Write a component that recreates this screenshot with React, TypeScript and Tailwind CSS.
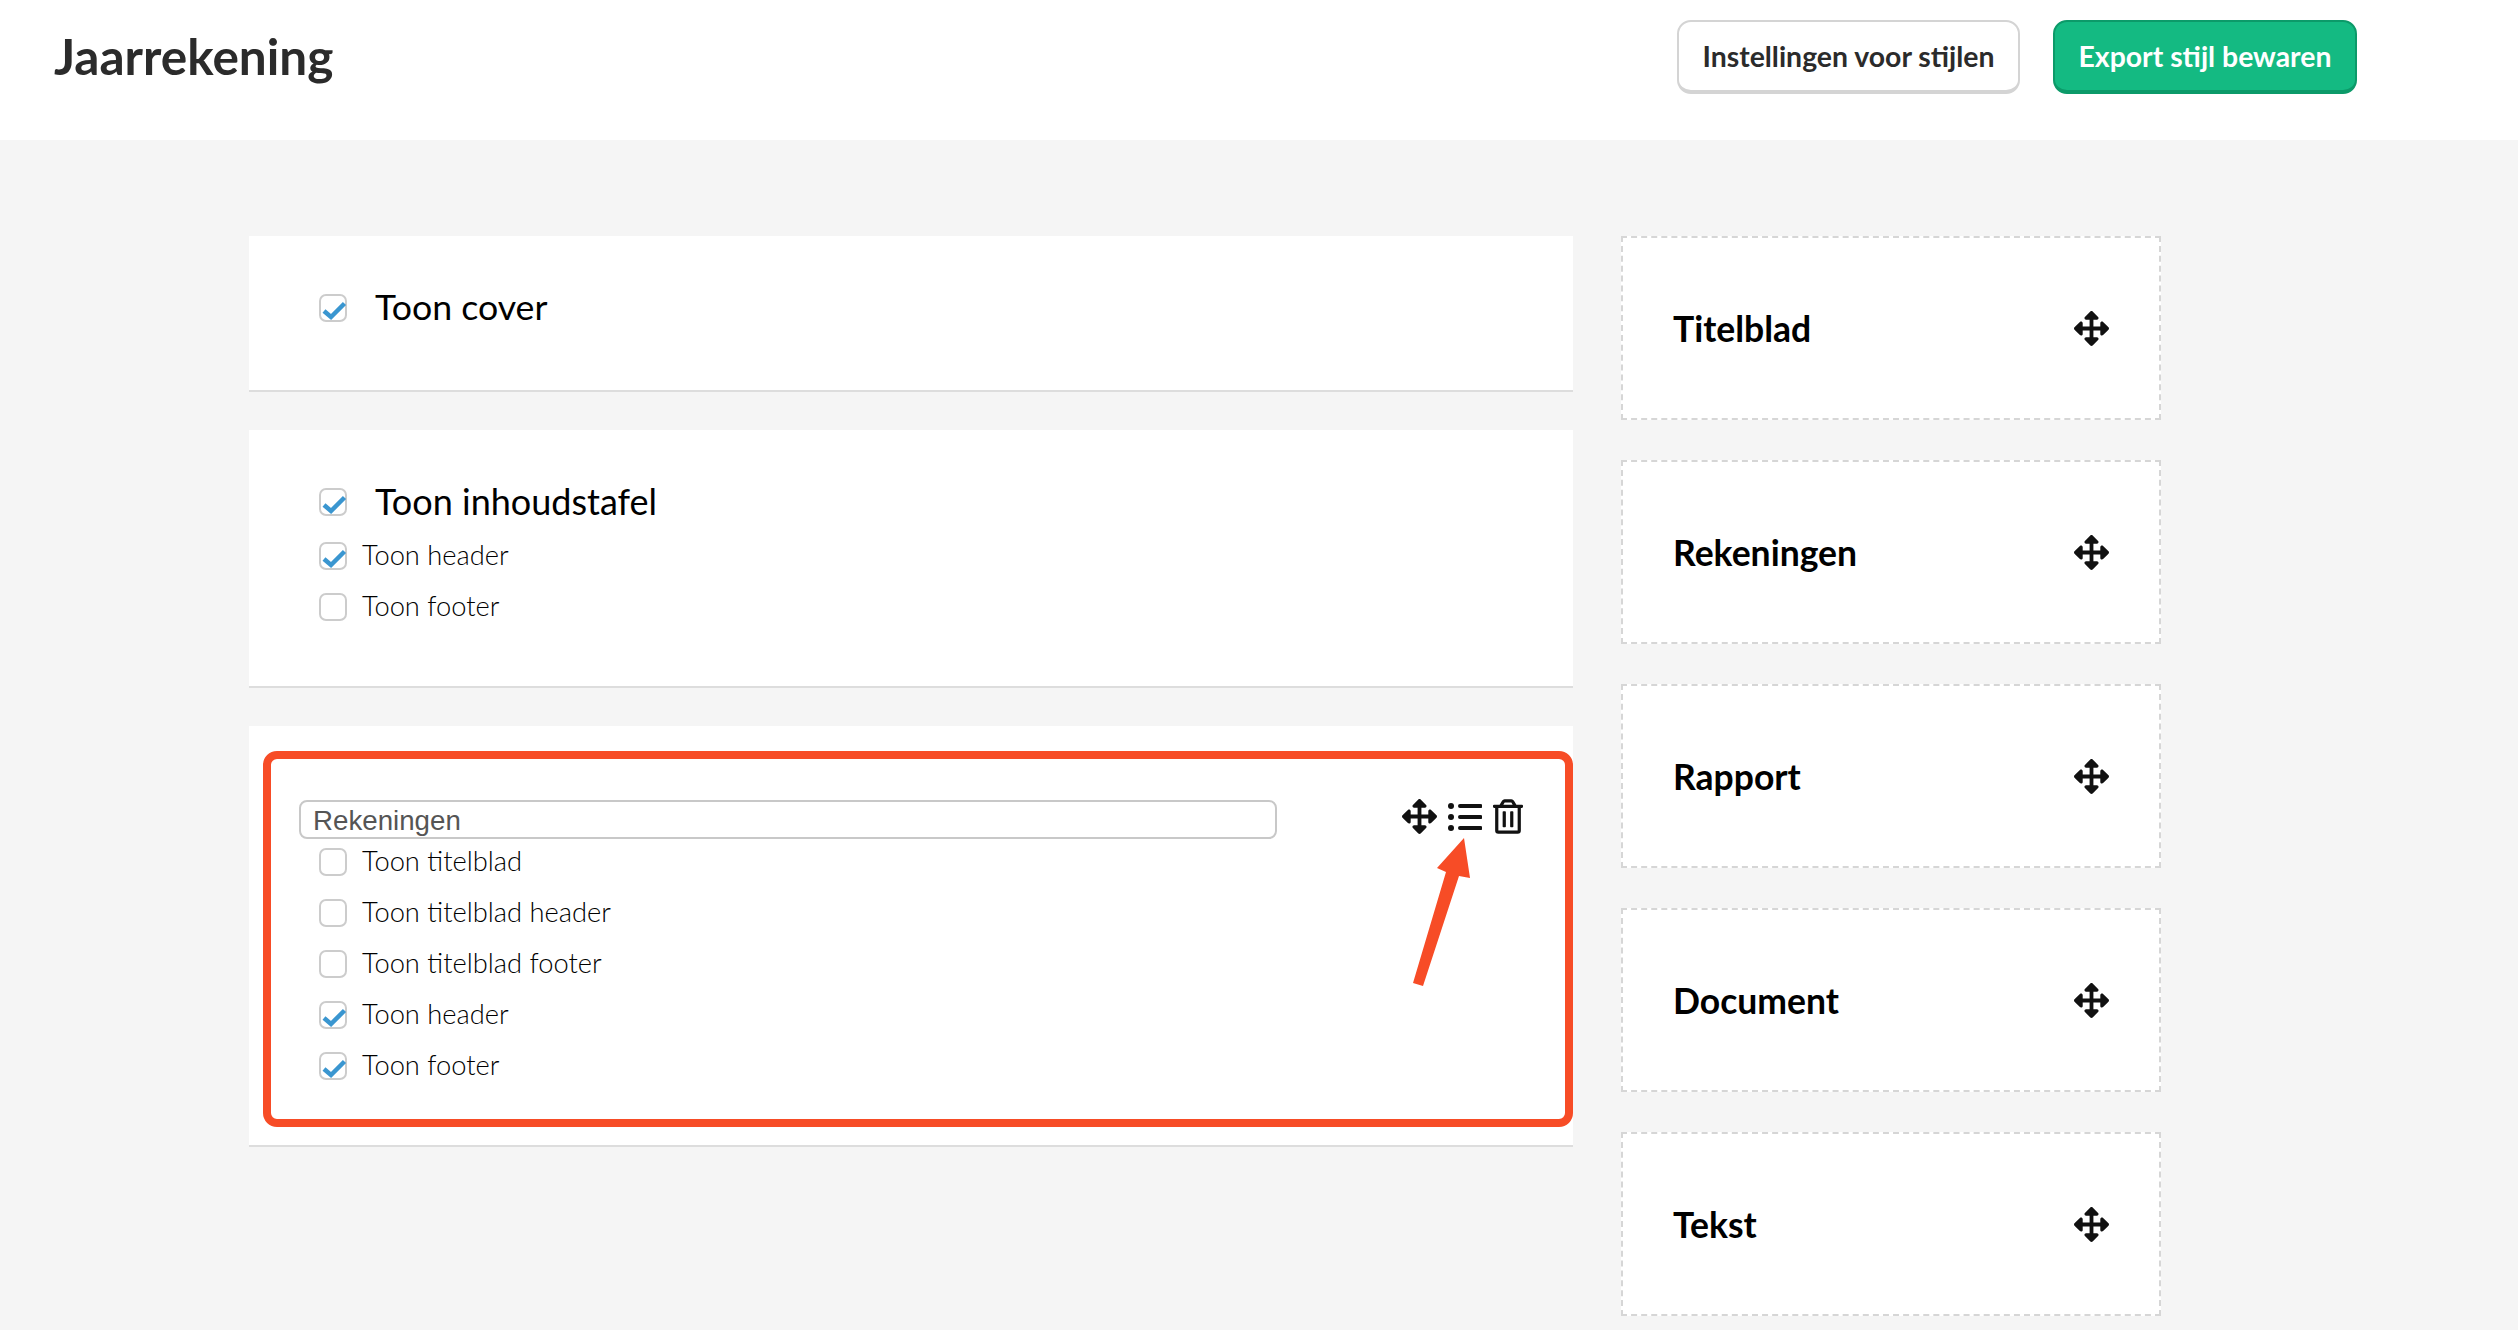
import { FaArrowsAlt, FaRegTrashAlt } from "react-icons/fa";

const blocks = ["Titelblad", "Rekeningen", "Rapport", "Document", "Tekst"];

const accountOptions = [
  { label: "Toon titelblad", checked: false },
  { label: "Toon titelblad header", checked: false },
  { label: "Toon titelblad footer", checked: false },
  { label: "Toon header", checked: true },
  { label: "Toon footer", checked: true },
];

const Checkbox = ({ checked }: { checked: boolean }) => (
  <span className="block w-[28px] h-[28px] shrink-0 border-2 border-[#cccccc] rounded-[7px] bg-white">
    {checked && (
      <svg viewBox="0 0 24 24" className="w-full h-full overflow-visible">
        <path d="M3 15 L10 21 L23.5 7.5" fill="none" stroke="#3a96d0" strokeWidth="4.5" />
      </svg>
    )}
  </span>
);

const Option = ({ label, checked }: { label: string; checked: boolean }) => (
  <label className="flex items-center h-[28px] gap-[15px] text-[27.3px] font-light text-black">
    <Checkbox checked={checked} />
    <span className="-mt-[2px]">{label}</span>
  </label>
);

const ListIcon = () => (
  <svg viewBox="0 0 34 28" className="w-[34px] h-[28px]">
    <circle cx="3" cy="3" r="3" fill="#111111" />
    <circle cx="3" cy="14" r="3" fill="#111111" />
    <circle cx="3" cy="25" r="3" fill="#111111" />
    <path d="M12 3 H32.5 M12 14 H32.5 M12 25 H32.5" stroke="#111111" strokeWidth="4" strokeLinecap="round" />
  </svg>
);

export default function App() {
  return (
    <div className="h-[1330px] overflow-hidden bg-[#f5f5f5] font-['Lato',sans-serif]">
      {/* Header */}
      <header className="h-[140px] bg-white flex items-start pt-[20px] pl-[54px] pr-[161px]">
        <h1 className="text-[49.5px] leading-[72px] font-bold text-[#2b2b2b] grow">Jaarrekening</h1>
        <button className="w-[343px] h-[74px] bg-white border-2 border-b-4 border-[#d4d4d4] rounded-[14px] text-[28.4px] font-bold text-[#2b2b2b]">
          Instellingen voor stijlen
        </button>
        <button className="ml-[33px] w-[304px] h-[74px] bg-[#14ba82] border-2 border-b-4 border-[#0c9a69] rounded-[14px] text-[28.4px] font-bold text-white">
          Export stijl bewaren
        </button>
      </header>

      <main className="flex gap-[48px] pl-[249px] pt-[96px]">
        {/* Report sections */}
        <div className="w-[1324px] flex flex-col gap-[38px]">
          <section className="h-[156px] bg-white border-b-2 border-[#dddddd] pl-[70px] pt-[58px]">
            <label className="flex items-center h-[28px] gap-[28px] text-[35.7px] text-black">
              <Checkbox checked />
              <span className="-mt-[3px]">Toon cover</span>
            </label>
          </section>

          <section className="h-[258px] bg-white border-b-2 border-[#dddddd] pl-[70px] pt-[58px]">
            <label className="flex items-center h-[28px] gap-[28px] text-[36px] text-black">
              <Checkbox checked />
              <span className="-mt-[3px]">Toon inhoudstafel</span>
            </label>
            <div className="mt-[26px] flex flex-col gap-[23px]">
              <Option label="Toon header" checked />
              <Option label="Toon footer" checked={false} />
            </div>
          </section>

          <section className="h-[421px] bg-white border-b-2 border-[#dddddd] pt-[25px] pl-[14px]">
            <div className="relative w-[1310px] h-[376px] border-[8px] border-[#f74c26] rounded-[14px] pl-[28px] pt-[40px]">
              <div className="flex items-start">
                <input
                  readOnly
                  defaultValue="Rekeningen"
                  className="mt-[1px] w-[978px] h-[39px] border-2 border-[#c8c8c8] rounded-[8px] pl-[12px] pt-[3px] text-[27.7px] text-[#555555] font-['Liberation_Sans',sans-serif] outline-none"
                />
                <div className="ml-[125px] flex items-center gap-[11px] text-[#111111]">
                  <FaArrowsAlt className="w-[35px] h-[35px]" />
                  <ListIcon />
                  <FaRegTrashAlt className="w-[30px] h-[35px]" />
                </div>
              </div>
              <div className="mt-[9px] ml-[20px] flex flex-col gap-[23px]">
                {accountOptions.map((o) => (
                  <Option key={o.label} label={o.label} checked={o.checked} />
                ))}
              </div>
              {/* Annotation arrow */}
              <svg viewBox="0 0 80 150" className="absolute left-[1130px] top-[79px] w-[80px] h-[150px]">
                <polygon points="63,0 36,30 45,34 12,145 22,148 58,38 69,40" fill="#f74c26" />
              </svg>
            </div>
          </section>
        </div>

        {/* Available blocks */}
        <aside className="w-[540px] flex flex-col gap-[40px]">
          {blocks.map((name) => (
            <div
              key={name}
              className="h-[184px] bg-white border-2 border-dashed border-[#d6d6d6] flex items-center justify-between pl-[50px] pr-[50px]"
            >
              <span className="mt-[2px] text-[35.5px] font-bold text-black">{name}</span>
              <FaArrowsAlt className="w-[35px] h-[35px] text-[#111111]" />
            </div>
          ))}
        </aside>
      </main>
    </div>
  );
}
